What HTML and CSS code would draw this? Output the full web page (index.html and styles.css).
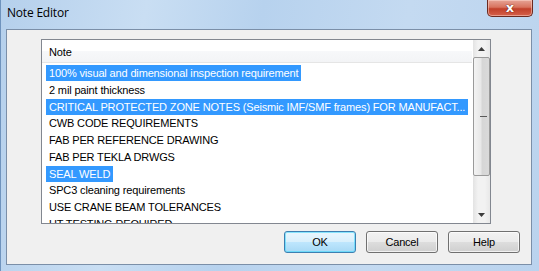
FILE: index.html
```html
<!DOCTYPE html>
<html>
<head>
<meta charset="utf-8">
<link rel="stylesheet" href="styles.css">
</head>
<body>
<div class="window">
  <div class="titlebar">
    <span class="title">Note Editor</span>
    <div class="close"><span class="x">x</span></div>
  </div>
  <div class="client">
    <div class="listbox">
      <div class="list-main">
        <div class="header"><span class="hcell">Note</span></div>
        <div class="rows">
          <div class="row"><span class="item sel">100% visual and dimensional inspection requirement</span></div>
          <div class="row"><span class="item">2 mil paint thickness</span></div>
          <div class="row"><span class="item sel">CRITICAL PROTECTED ZONE NOTES (Seismic IMF/SMF frames) FOR MANUFACT...</span></div>
          <div class="row"><span class="item">CWB CODE REQUIREMENTS</span></div>
          <div class="row"><span class="item">FAB PER REFERENCE DRAWING</span></div>
          <div class="row"><span class="item">FAB PER TEKLA DRWGS</span></div>
          <div class="row"><span class="item sel">SEAL WELD</span></div>
          <div class="row"><span class="item">SPC3 cleaning requirements</span></div>
          <div class="row"><span class="item">USE CRANE BEAM TOLERANCES</span></div>
          <div class="row"><span class="item">UT TESTING REQUIRED</span></div>
        </div>
      </div>
      <div class="scrollbar">
        <div class="arrow"><svg width="7" height="4" viewBox="0 0 7 4"><path d="M0 4 L3.5 0 L7 4 Z" fill="#3c3c3c"/></svg></div>
        <div class="track">
          <div class="thumb"><div class="grip"></div></div>
        </div>
        <div class="arrow"><svg width="7" height="4" viewBox="0 0 7 4"><path d="M0 0 L3.5 4 L7 0 Z" fill="#3c3c3c"/></svg></div>
      </div>
    </div>
    <div class="buttons">
      <div class="btn default">OK</div>
      <div class="btn">Cancel</div>
      <div class="btn">Help</div>
    </div>
  </div>
</div>
</body>
</html>
```

FILE: styles.css
```css
html, body {
  margin: 0;
  padding: 0;
}
body {
  width: 539px;
  height: 271px;
  overflow: hidden;
  background: #a9c6e6;
}
.window {
  width: 539px;
  height: 271px;
  box-sizing: border-box;
  background: linear-gradient(100deg, #b5d0ec 0%, #c9def3 25%, #b7d2ee 45%, #c4daf1 70%, #bad3ee 100%);
  display: flex;
  flex-direction: column;
  border-left: 1px solid #6f93bd;
}
.titlebar {
  height: 29px;
  flex: none;
  display: flex;
  align-items: flex-start;
  justify-content: space-between;
}
.title {
  font-family: "Open Sans", "Noto Sans", sans-serif;
  font-size: 12px;
  color: #000;
  margin-left: 6px;
  margin-top: 4px;
  letter-spacing: -0.2px;
}
.close {
  width: 46px;
  height: 17px;
  margin-right: 6px;
  box-sizing: border-box;
  border: 1px solid #6b2a20;
  border-top: none;
  border-radius: 0 0 5px 5px;
  background: linear-gradient(#e6a496 0%, #d8735e 45%, #c1402a 55%, #d5604a 100%);
  box-shadow: inset 0 0 0 1px rgba(255,220,210,0.5);
  display: flex;
  align-items: center;
  justify-content: center;
}
.close .x {
  font-family: "DejaVu Sans", sans-serif;
  font-weight: bold;
  font-size: 13px;
  line-height: 13px;
  color: #fff;
  margin-top: -2px;
  text-shadow: 0 0 1px #5a1a10, 0 0 1px #5a1a10;
}
.client {
  flex: 1;
  margin: 0 7px 6px 5px;
  border: 1px solid #7b8fa8;
  background: #f0f0f0;
  display: flex;
  flex-direction: column;
  padding: 9px 11px 0 34px;
}
.listbox {
  width: 450px;
  height: 185px;
  box-sizing: border-box;
  border: 1px solid #828790;
  background: #fff;
  display: flex;
  flex: none;
  overflow: hidden;
}
.list-main {
  flex: 1;
  display: flex;
  flex-direction: column;
  overflow: hidden;
}
.header {
  height: 23px;
  flex: none;
  box-sizing: border-box;
  border-bottom: 1px solid #e5e5e5;
  background: linear-gradient(#ffffff 0%, #ffffff 50%, #f7f8fa 51%, #f3f4f6 100%);
  margin-right: 1px;
  display: flex;
  align-items: center;
}
.hcell {
  font-family: "Liberation Sans", Arial, sans-serif;
  font-size: 11px;
  color: #000;
  margin-left: 7px;
  margin-top: 1px;
  letter-spacing: -0.15px;
}
.rows {
  padding-top: 2px;
  display: flex;
  flex-direction: column;
}
.row {
  height: 16.75px;
  flex: none;
  display: flex;
  align-items: stretch;
  padding-left: 4px;
}
.item {
  font-family: "Liberation Sans", Arial, sans-serif;
  font-size: 11px;
  line-height: 16px;
  height: 16px;
  color: #000;
  padding: 0 3px;
  letter-spacing: -0.15px;
  white-space: nowrap;
}
.item.sel {
  background: #3399ff;
  color: #fff;
}
.scrollbar {
  width: 17px;
  flex: none;
  display: flex;
  flex-direction: column;
  background: linear-gradient(90deg, #e3e3e3 0%, #f2f2f2 30%, #f2f2f2 70%, #e8e8e8 100%);
}
.arrow {
  height: 17px;
  flex: none;
  display: flex;
  align-items: center;
  justify-content: center;
}
.track {
  flex: 1;
  display: flex;
  flex-direction: column;
}
.thumb {
  height: 119px;
  box-sizing: border-box;
  border: 1px solid #9a9a9a;
  border-radius: 2px;
  background: linear-gradient(90deg, #f3f3f3 0%, #e8e8e8 45%, #d6d6d6 55%, #dadada 100%);
  display: flex;
  align-items: center;
  justify-content: center;
}
.grip {
  width: 7px;
  height: 1px;
  background: #5a5a5a;
  margin-left: 4px;
}
.buttons {
  display: flex;
  justify-content: flex-end;
  gap: 10px;
  margin-top: 7px;
}
.btn {
  width: 72px;
  height: 22px;
  box-sizing: border-box;
  border: 1px solid #707070;
  border-radius: 3px;
  background: linear-gradient(#f2f2f2 0%, #ebebeb 48%, #dddddd 52%, #cfcfcf 100%);
  box-shadow: inset 0 0 0 1px rgba(255,255,255,0.7);
  font-family: "Liberation Sans", Arial, sans-serif;
  font-size: 11px;
  letter-spacing: -0.2px;
  color: #000;
  display: flex;
  align-items: center;
  justify-content: center;
}
.btn.default {
  border-color: #3c7fb1;
  background: linear-gradient(#eaf6fd 0%, #d9f0fc 48%, #bee6fd 52%, #a7d9f5 100%);
  box-shadow: inset 0 0 0 1px rgba(72,216,251,0.6);
}
```
